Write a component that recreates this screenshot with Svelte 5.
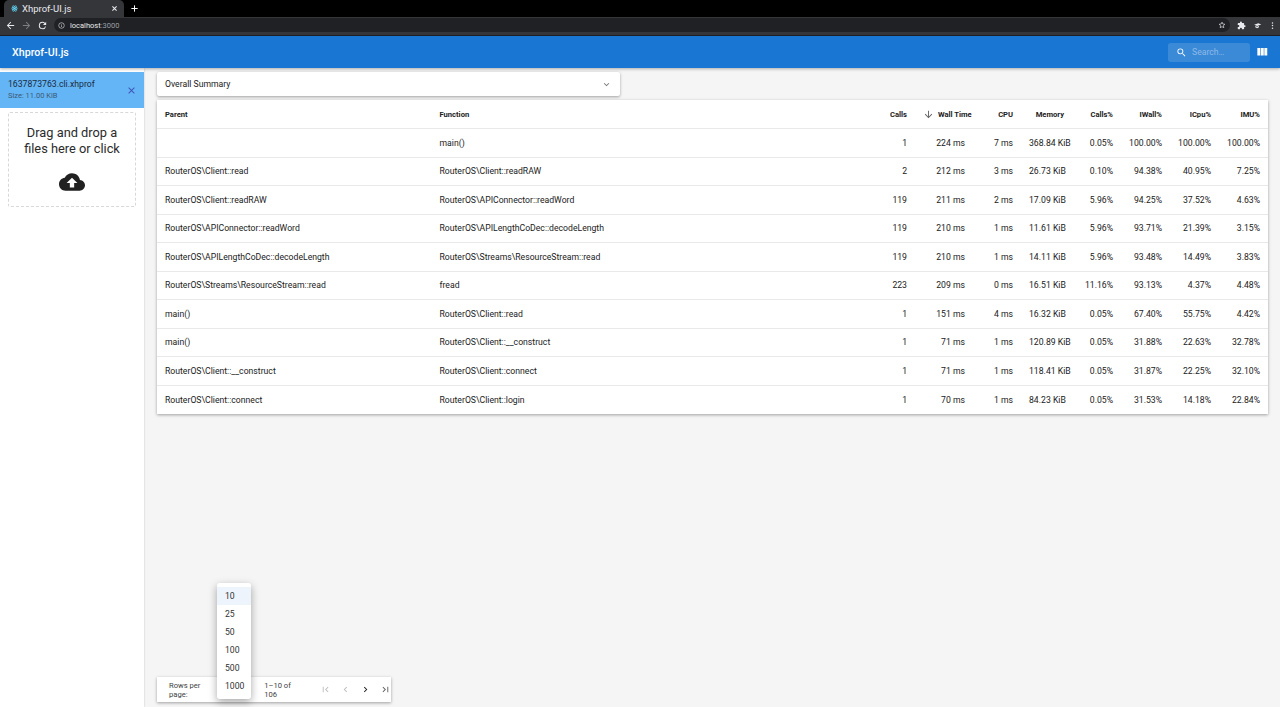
<script lang="ts">
  const columns = [
    { key: 'calls', label: 'Calls' },
    { key: 'wall', label: 'Wall Time', sorted: true },
    { key: 'cpu', label: 'CPU' },
    { key: 'memory', label: 'Memory' },
    { key: 'callsPct', label: 'Calls%' },
    { key: 'iwall', label: 'IWall%' },
    { key: 'icpu', label: 'ICpu%' },
    { key: 'imu', label: 'IMU%' }
  ];

  const rows = [
    ['', 'main()', '1', '224 ms', '7 ms', '368.84 KiB', '0.05%', '100.00%', '100.00%', '100.00%'],
    ['RouterOS\\Client::read', 'RouterOS\\Client::readRAW', '2', '212 ms', '3 ms', '26.73 KiB', '0.10%', '94.38%', '40.95%', '7.25%'],
    ['RouterOS\\Client::readRAW', 'RouterOS\\APIConnector::readWord', '119', '211 ms', '2 ms', '17.09 KiB', '5.96%', '94.25%', '37.52%', '4.63%'],
    ['RouterOS\\APIConnector::readWord', 'RouterOS\\APILengthCoDec::decodeLength', '119', '210 ms', '1 ms', '11.61 KiB', '5.96%', '93.71%', '21.39%', '3.15%'],
    ['RouterOS\\APILengthCoDec::decodeLength', 'RouterOS\\Streams\\ResourceStream::read', '119', '210 ms', '1 ms', '14.11 KiB', '5.96%', '93.48%', '14.49%', '3.83%'],
    ['RouterOS\\Streams\\ResourceStream::read', 'fread', '223', '209 ms', '0 ms', '16.51 KiB', '11.16%', '93.13%', '4.37%', '4.48%'],
    ['main()', 'RouterOS\\Client::read', '1', '151 ms', '4 ms', '16.32 KiB', '0.05%', '67.40%', '55.75%', '4.42%'],
    ['main()', 'RouterOS\\Client::__construct', '1', '71 ms', '1 ms', '120.89 KiB', '0.05%', '31.88%', '22.63%', '32.78%'],
    ['RouterOS\\Client::__construct', 'RouterOS\\Client::connect', '1', '71 ms', '1 ms', '118.41 KiB', '0.05%', '31.87%', '22.25%', '32.10%'],
    ['RouterOS\\Client::connect', 'RouterOS\\Client::login', '1', '70 ms', '1 ms', '84.23 KiB', '0.05%', '31.53%', '14.18%', '22.84%']
  ];

  const pageSizes = [10, 25, 50, 100, 500, 1000];
</script>

<div class="page">
  <div class="tabstrip">
    <div class="tab">
      <svg class="favicon" viewBox="0 0 24 24" fill="none" stroke="#61dafb" stroke-width="2">
        <circle cx="12" cy="12" r="2.4" fill="#61dafb" stroke="none" />
        <ellipse cx="12" cy="12" rx="11" ry="4.4" />
        <ellipse cx="12" cy="12" rx="11" ry="4.4" transform="rotate(60 12 12)" />
        <ellipse cx="12" cy="12" rx="11" ry="4.4" transform="rotate(120 12 12)" />
      </svg>
      <span class="tab-title">Xhprof-UI.js</span>
      <svg class="tab-close" viewBox="0 0 10 10" stroke="#e8eaed" stroke-width="1.5"><path d="M2 2l6 6M8 2l-6 6" /></svg>
    </div>
    <svg class="new-tab" viewBox="0 0 10 10" stroke="#fff" stroke-width="1.4"><path d="M5 .5v9M.5 5h9" /></svg>
  </div>

  <div class="toolbar">
    <svg class="nav" viewBox="0 0 24 24" fill="#e8eaed"><path d="M20 11H7.83l5.59-5.59L12 4l-8 8 8 8 1.41-1.41L7.83 13H20v-2z" /></svg>
    <svg class="nav" viewBox="0 0 24 24" fill="#7d7f82"><path d="M12 4l-1.41 1.41L16.17 11H4v2h12.17l-5.58 5.59L12 20l8-8z" /></svg>
    <svg class="nav" viewBox="0 0 24 24" fill="#e8eaed"><path d="M17.65 6.35A7.95 7.95 0 0 0 12 4a8 8 0 1 0 7.73 10h-2.08A6 6 0 1 1 12 6c1.66 0 3.14.69 4.22 1.78L13 11h7V4l-2.35 2.35z" /></svg>
    <div class="omnibox">
      <svg class="info" viewBox="0 0 24 24" fill="none" stroke="#e8eaed" stroke-width="2"><circle cx="12" cy="12" r="9.5" /><path d="M12 11v6M12 7v2" /></svg>
      <span class="host">localhost</span><span class="port">:3000</span>
      <svg class="star" viewBox="0 0 24 24" fill="none" stroke="#e8eaed" stroke-width="2"><path d="M12 3.5l2.6 5.6 6.1.7-4.5 4.2 1.2 6L12 17l-5.4 3 1.2-6-4.5-4.2 6.1-.7z" /></svg>
    </div>
    <svg class="ext" viewBox="0 0 24 24" fill="#e8eaed"><path d="M20.5 11H19V7a2 2 0 0 0-2-2h-4V3.5a2.5 2.5 0 0 0-5 0V5H4a2 2 0 0 0-2 2v3.8h1.5a2.7 2.7 0 0 1 0 5.4H2V20a2 2 0 0 0 2 2h3.8v-1.5a2.7 2.7 0 0 1 5.4 0V22H17a2 2 0 0 0 2-2v-4h1.5a2.5 2.5 0 0 0 0-5z" /></svg>
    <svg class="ext" viewBox="0 0 24 24" fill="#e8eaed"><path d="M3 10l11-4 8 3-11 4zM6 13.5l5 2 5-2v3l-5 2.5-5-2.5z" /></svg>
    <svg class="ext dots" viewBox="0 0 24 24" fill="#e8eaed"><circle cx="12" cy="5" r="2" /><circle cx="12" cy="12" r="2" /><circle cx="12" cy="19" r="2" /></svg>
  </div>

  <header class="appbar">
    <h1>Xhprof-UI.js</h1>
    <div class="search">
      <svg viewBox="0 0 24 24" fill="#fff"><path d="M15.5 14h-.79l-.28-.27A6.47 6.47 0 0 0 16 9.5 6.5 6.5 0 1 0 9.5 16c1.61 0 3.09-.59 4.23-1.57l.27.28v.79l5 4.99L20.49 19l-4.99-5zm-6 0C7.01 14 5 11.99 5 9.5S7.01 5 9.5 5 14 7.01 14 9.5 11.99 14 9.5 14z" /></svg>
      <span>Search…</span>
    </div>
    <svg class="view-columns" viewBox="0 0 24 24" fill="#fff"><path d="M10 18h5V5h-5v13zm-6 0h5V5H4v13zM16 5v13h5V5h-5z" /></svg>
  </header>

  <div class="body">
    <aside class="sidebar">
      <div class="file">
        <div>
          <div class="file-name">1637873763.cli.xhprof</div>
          <div class="file-size">Size: 11.00 KiB</div>
        </div>
        <svg viewBox="0 0 24 24" fill="#3f51b5"><path d="M19 6.41L17.59 5 12 10.59 6.41 5 5 6.41 10.59 12 5 17.59 6.41 19 12 13.41 17.59 19 19 17.59 13.41 12z" /></svg>
      </div>
      <div class="dropzone">
        <p>Drag and drop a files here or click</p>
        <svg viewBox="0 0 24 24" fill="#212121"><path d="M19.35 10.04C18.67 6.59 15.64 4 12 4 9.11 4 6.6 5.64 5.35 8.04 2.34 8.36 0 10.91 0 14c0 3.31 2.69 6 6 6h13c2.76 0 5-2.24 5-5 0-2.64-2.05-4.78-4.65-4.96zM14 13v4h-4v-4H7l5-5 5 5h-3z" /></svg>
      </div>
    </aside>

    <main class="main">
      <div class="summary">
        <span>Overall Summary</span>
        <svg viewBox="0 0 24 24" fill="#757575"><path d="M7.41 8.59L12 13.17l4.59-4.58L18 10l-6 6-6-6z" /></svg>
      </div>

      <table class="grid">
        <thead>
          <tr>
            <th class="text parent">Parent</th>
            <th class="text">Function</th>
            {#each columns as col}
              <th class={col.key}>
                {#if col.sorted}
                  <svg class="sort" viewBox="0 0 24 24" fill="#616161"><path d="M20 12l-1.41-1.41L13 16.17V4h-2v12.17l-5.58-5.59L4 12l8 8z" /></svg>
                {/if}
                {col.label}
              </th>
            {/each}
          </tr>
        </thead>
        <tbody>
          {#each rows as row}
            <tr>
              {#each row as cell, i}
                <td class:text={i < 2}>{cell}</td>
              {/each}
            </tr>
          {/each}
        </tbody>
      </table>

      <div class="pagination">
        <span class="rows-label">Rows per page:</span>
        <span class="range">1–10 of 106</span>
        <div class="pager">
          <svg viewBox="0 0 24 24" fill="#bdbdbd"><path d="M18.41 16.59L13.82 12l4.59-4.59L17 6l-6 6 6 6zM6 6h2v12H6z" /></svg>
          <svg viewBox="0 0 24 24" fill="#bdbdbd"><path d="M15.41 7.41L14 6l-6 6 6 6 1.41-1.41L10.83 12z" /></svg>
          <svg viewBox="0 0 24 24" fill="#212121"><path d="M10 6L8.59 7.41 13.17 12l-4.58 4.59L10 18l6-6z" /></svg>
          <svg viewBox="0 0 24 24" fill="#616161"><path d="M5.59 7.41L10.18 12l-4.59 4.59L7 18l6-6-6-6zM16 6h2v12h-2z" /></svg>
        </div>
      </div>
    </main>
  </div>

  <ul class="menu">
    {#each pageSizes as size, i}
      <li class:selected={i === 0}>{size}</li>
    {/each}
  </ul>
</div>

<style>
  :global(body) {
    margin: 0;
    font-family: Roboto, "Liberation Sans", sans-serif;
    color: #212121;
  }

  .page {
    position: relative;
    display: flex;
    flex-direction: column;
    height: 707px;
    overflow: hidden;
    background: #f5f5f5;
  }

  .tabstrip {
    display: flex;
    align-items: center;
    height: 17px;
    padding-left: 4px;
    background: #000;
    flex: none;
  }

  .tab {
    display: flex;
    align-items: center;
    width: 120px;
    height: 17px;
    box-sizing: border-box;
    padding: 0 7px;
    background: #35363a;
    border-radius: 5px 5px 0 0;
    color: #e8eaed;
    font-size: 9.5px;
  }

  .favicon {
    width: 7px;
    height: 7px;
    margin-right: 4px;
  }

  .tab-title {
    flex: 1;
  }

  .tab-close {
    width: 7px;
    height: 7px;
    margin-right: -1px;
  }

  .new-tab {
    width: 7px;
    height: 7px;
    margin-left: 7px;
  }

  .toolbar {
    display: flex;
    align-items: center;
    height: 19px;
    box-sizing: border-box;
    padding: 0 5px 2px;
    background: #35363a;
    border-bottom: 1px solid #202124;
    flex: none;
  }

  .nav {
    width: 11px;
    height: 11px;
    margin-right: 5px;
  }

  .omnibox {
    display: flex;
    align-items: center;
    flex: 1;
    height: 14px;
    margin-left: 1px;
    padding: 0 4px;
    background: #202124;
    border-radius: 7px;
    font-size: 7.5px;
    color: #e8eaed;
  }

  .info {
    width: 7px;
    height: 7px;
    margin-right: 5px;
  }

  .port {
    color: #9aa0a6;
  }

  .star {
    width: 8px;
    height: 8px;
    margin-left: auto;
    margin-right: 0;
  }

  .ext {
    width: 9px;
    height: 9px;
    margin-left: 7px;
  }

  .ext.dots {
    margin-right: -2px;
    margin-left: 6px;
  }

  .appbar {
    position: relative;
    z-index: 3;
    display: flex;
    align-items: center;
    height: 32px;
    padding: 0 11px 0 12px;
    background: #1976d2;
    box-shadow: 0 1px 3px rgba(0, 0, 0, 0.3);
    flex: none;
  }

  .appbar h1 {
    margin: 0;
    color: #fff;
    font-size: 10.67px;
    font-weight: 500;
    flex: 1;
  }

  .search {
    display: flex;
    align-items: center;
    width: 82px;
    height: 19px;
    box-sizing: border-box;
    padding-left: 8px;
    background: rgba(255, 255, 255, 0.15);
    border-radius: 2.67px;
    color: rgba(255, 255, 255, 0.42);
    font-size: 8.67px;
  }

  .search svg {
    width: 11px;
    height: 11px;
    margin-right: 5px;
  }

  .view-columns {
    width: 14px;
    height: 14px;
    margin-left: 5px;
  }

  .body {
    display: flex;
    flex: 1;
    min-height: 0;
  }

  .sidebar {
    width: 144px;
    padding-top: 4px;
    background: #fff;
    box-shadow: 0 0 2px rgba(0, 0, 0, 0.2);
    flex: none;
  }

  .file {
    display: flex;
    align-items: center;
    justify-content: space-between;
    height: 36px;
    box-sizing: border-box;
    padding: 0 7px 0 8px;
    background: #64b5f6;
    line-height: 11px;
  }

  .file svg {
    width: 11px;
    height: 11px;
  }

  .file-name {
    font-size: 8.67px;
    color: #1a2a3a;
  }

  .file-size {
    font-size: 7.5px;
    color: #3d5a73;
  }

  .dropzone {
    display: flex;
    flex-direction: column;
    align-items: center;
    height: 95px;
    box-sizing: border-box;
    margin: 4px 8px 0;
    padding: 12px 6px 0;
    border: 1.33px dashed #d8d8d8;
    border-radius: 2px;
  }

  .dropzone p {
    margin: 0;
    font-size: 12.8px;
    line-height: 16px;
    text-align: center;
    color: #2b2b2b;
  }

  .dropzone svg {
    width: 26px;
    height: 26px;
    margin-top: 12px;
  }

  .main {
    display: flex;
    flex-direction: column;
    flex: 1;
    min-width: 0;
    padding: 4px 12px 5px 13px;
    font-size: 8.67px;
  }

  .summary {
    display: flex;
    align-items: center;
    justify-content: space-between;
    width: 463px;
    height: 24px;
    box-sizing: border-box;
    padding: 0 8px;
    background: #fff;
    border-radius: 2px;
    box-shadow: 0 1px 3px rgba(0, 0, 0, 0.35);
  }

  .summary svg {
    width: 11px;
    height: 11px;
  }

  .grid {
    width: 1111px;
    margin-top: 4px;
    table-layout: fixed;
    border-collapse: collapse;
    background: #fff;
    box-shadow: 0 1px 3px rgba(0, 0, 0, 0.35);
  }

  th,
  td {
    height: 28.5px;
    box-sizing: border-box;
    padding: 0 8px;
    font-size: 8.67px;
    font-weight: 400;
    text-align: right;
    white-space: nowrap;
    border-bottom: 1px solid #e9e9e9;
  }

  tbody tr:last-child td {
    border-bottom: none;
  }

  th {
    font-weight: 700;
    font-size: 7.6px;
    color: #212121;
  }

  .text {
    text-align: left;
  }

  th.parent {
    width: 274.5px;
  }

  th.calls {
    width: 49px;
  }

  th.wall {
    width: 58px;
  }

  th.cpu {
    width: 48px;
  }

  th.memory {
    width: 51px;
  }

  th.callsPct,
  th.iwall,
  th.icpu,
  th.imu {
    width: 49px;
  }

  .sort {
    width: 11px;
    height: 11px;
    vertical-align: -3px;
    margin-right: 2px;
  }

  .pagination {
    display: flex;
    align-items: center;
    width: 234px;
    height: 25px;
    box-sizing: border-box;
    margin-top: auto;
    padding-left: 12px;
    background: #fff;
    box-shadow: 0 1px 3px rgba(0, 0, 0, 0.35);
    font-size: 7.6px;
    color: #424242;
  }

  .range {
    margin-left: 44px;
  }

  .pager {
    display: flex;
    gap: 9px;
    margin-left: 15px;
  }

  .pager svg {
    width: 11px;
    height: 11px;
  }

  .menu {
    position: absolute;
    left: 217px;
    top: 583px;
    width: 34px;
    margin: 0;
    padding: 4px 0;
    list-style: none;
    background: #fff;
    border-radius: 2.67px;
    box-shadow: 0 3px 8px rgba(0, 0, 0, 0.35);
    font-size: 8.67px;
    color: #333;
  }

  .menu li {
    height: 18px;
    line-height: 18px;
    padding-left: 8px;
  }

  .menu .selected {
    background: #edf4fb;
  }
</style>
